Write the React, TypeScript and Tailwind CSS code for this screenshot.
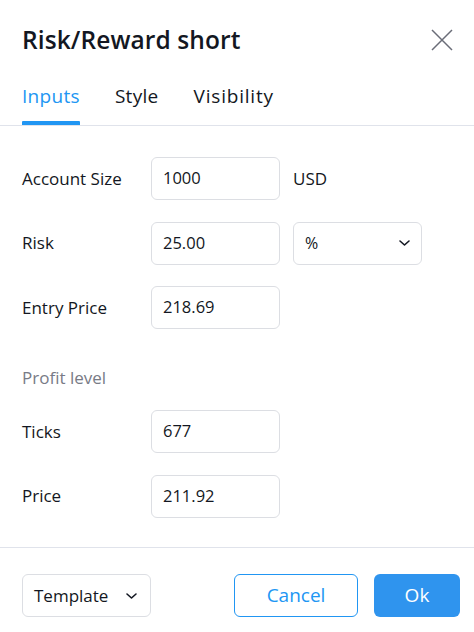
const font = { fontFamily: '"Open Sans", "Noto Sans", "DejaVu Sans", sans-serif' };

function Chevron({ className }: { className?: string }) {
	return (
		<svg viewBox="0 0 12 8" className={className} fill="none" stroke="currentColor" strokeWidth="1.6" strokeLinecap="round" strokeLinejoin="round">
			<path d="M1.5 2 L6 6 L10.5 2" />
		</svg>
	);
}

function Close() {
	return (
		<svg viewBox="0 0 22 22" className="h-[22px] w-[22px] text-[#6a6d78]" fill="none" stroke="currentColor" strokeWidth="1.5">
			<path d="M1 1 L21 21 M21 1 L1 21" />
		</svg>
	);
}

function Field({ value }: { value: string }) {
	return (
		<div className="flex h-[43px] w-[129px] items-center rounded-[6px] border border-[#dcdee3] px-[11px] text-[16.5px] text-[#131722]">
			{value}
		</div>
	);
}

function Row({ label, value, extra }: { label: string; value: string; extra?: React.ReactNode }) {
	return (
		<div className="flex items-center">
			<div className="w-[129px] text-[17px] text-[#131722]">{label}</div>
			<Field value={value} />
			{extra}
		</div>
	);
}

export default function App() {
	return (
		<div className="flex h-[632px] w-[474px] flex-col bg-white" style={font}>
			{/* header */}
			<div className="flex items-center justify-between pl-[22px] pr-[21px] pt-[22px]">
				<h1 className="text-[24.5px] font-semibold leading-[36px] tracking-[0.1px] text-[#131722]">Risk/Reward short</h1>
				<Close />
			</div>

			{/* tabs */}
			<div className="mt-[26px] flex gap-[35px] border-b border-[#e0e3eb] px-[22px] text-[19px] leading-[24px] tracking-[0.3px]">
				<div className="flex flex-col">
					<span className="text-[#2196f3]">Inputs</span>
					<div className="mt-[13px] h-[4px] rounded-t-[1px] bg-[#2196f3]" />
				</div>
				<span className="text-[#131722]">Style</span>
				<span className="tracking-[0.8px] text-[#131722]">Visibility</span>
			</div>

			{/* body */}
			<div className="flex flex-1 flex-col px-[22px] pt-[31px]">
				<div className="flex flex-col gap-[21.5px]">
					<Row label="Account Size" value="1000" extra={<span className="ml-[13px] text-[17px] text-[#131722]">USD</span>} />
					<Row
						label="Risk"
						value="25.00"
						extra={
							<div className="ml-[13px] flex h-[43px] w-[129px] items-center justify-between rounded-[6px] border border-[#dcdee3] pl-[11px] pr-[10px] text-[16px] text-[#131722]">
								<span>%</span>
								<Chevron className="h-[8px] w-[13px] text-[#131722]" />
							</div>
						}
					/>
					<Row label="Entry Price" value="218.69" />
				</div>
				<div className="mt-[37px] text-[17px] leading-[24px] text-[#787b86]">Profit level</div>
				<div className="mt-[20px] flex flex-col gap-[21.5px]">
					<Row label="Ticks" value="677" />
					<Row label="Price" value="211.92" />
				</div>
			</div>

			{/* footer */}
			<div className="flex h-[85px] items-start border-t border-[#e0e3eb] pl-[22px] pr-[14px] pt-[26px]">
				<div className="flex h-[43px] w-[129px] items-center justify-between rounded-[6px] border border-[#dcdee3] pl-[11px] pr-[12px] text-[17px] text-[#131722]">
					<span>Template</span>
					<Chevron className="h-[8px] w-[13px] text-[#131722]" />
				</div>
				<div className="ml-auto flex gap-[16px]">
					<button className="h-[43px] w-[124px] rounded-[6px] border border-[#2196f3] text-[19px] text-[#2196f3]">Cancel</button>
					<button className="h-[43px] w-[86px] rounded-[6px] bg-[#2f94ee] text-[19px] text-white">Ok</button>
				</div>
			</div>
		</div>
	);
}
